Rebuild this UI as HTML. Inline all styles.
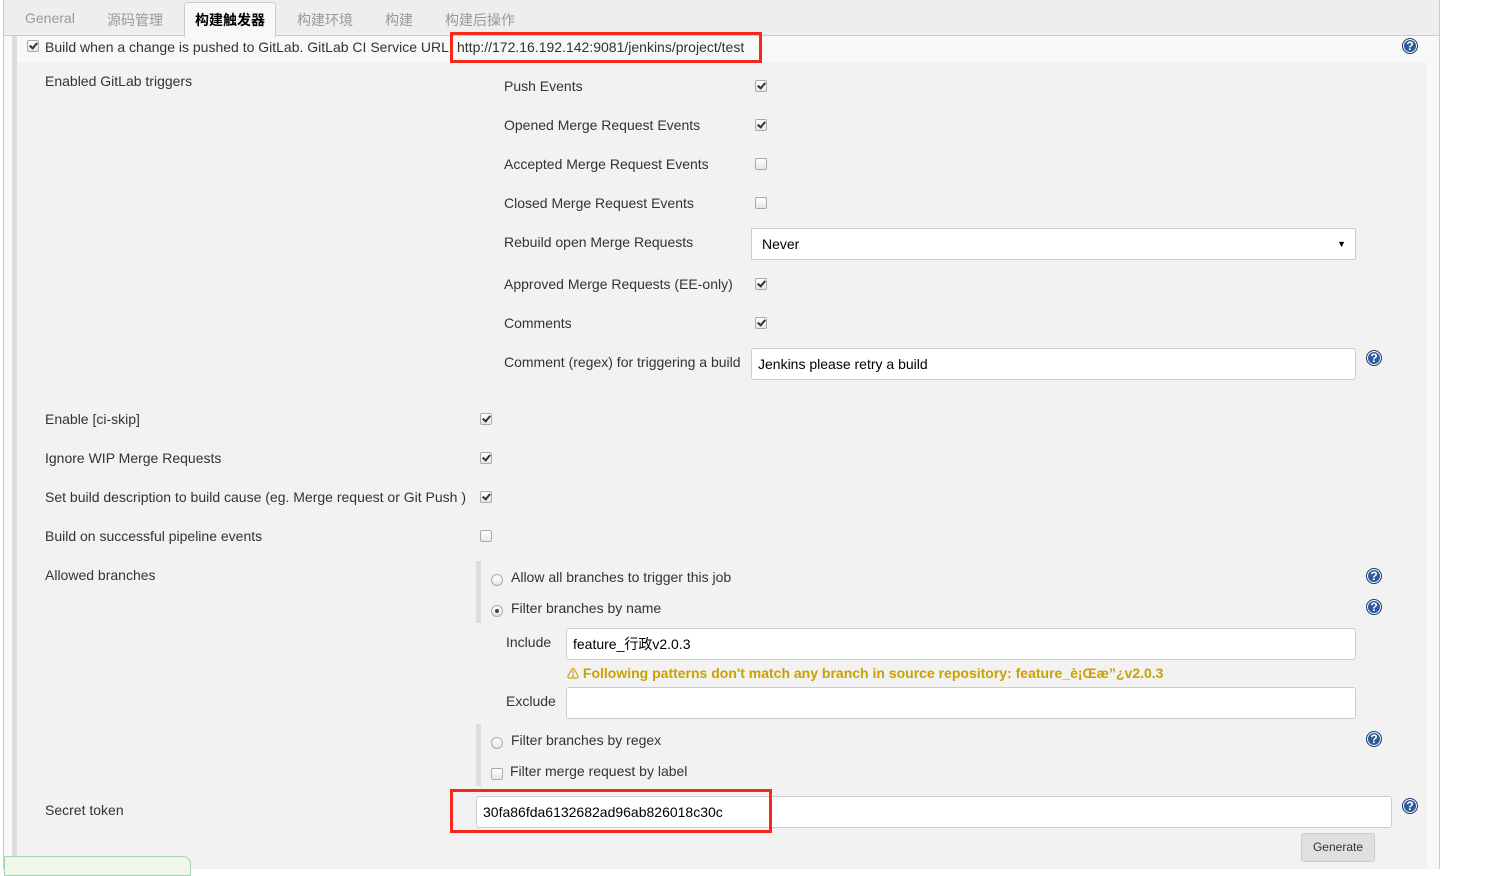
<!DOCTYPE html>
<html><head><meta charset="utf-8"><style>
*{box-sizing:border-box;margin:0;padding:0}
body{width:1492px;height:869px;background:#fff;position:relative;overflow:hidden;font-family:"Liberation Sans","Noto Sans CJK SC",sans-serif;font-size:14px;color:#333}
.a{position:absolute;white-space:nowrap}
.cb{position:absolute;width:12px;height:12px;border:1px solid #aaa;border-radius:2px;background:linear-gradient(#fff,#e6e6e6)}
.cb.on::after{content:"";position:absolute;left:3px;top:0px;width:3px;height:6px;border:solid #333;border-width:0 2px 2px 0;transform:rotate(40deg)}
.rd{position:absolute;width:12px;height:12px;border:1px solid #aaa;border-radius:50%;background:linear-gradient(#fff,#e6e6e6)}
.rd.on::after{content:"";position:absolute;left:3px;top:3px;width:4px;height:4px;border-radius:50%;background:#444}
.in{position:absolute;background:#fff;border:1px solid #ccc;border-radius:3px;font-size:14px;color:#000;padding-left:6px;display:flex;align-items:center}
.hp{position:absolute;width:16px;height:16px;border-radius:50%;background:#2e5b9a;border:1px solid #1d3f70;box-shadow:inset 0 0 0 1px #fff;color:#fff;font-weight:bold;font-size:12px;line-height:14px;text-align:center}
.red{position:absolute;border:3px solid #f5281e}
.tab{position:absolute;top:10px;color:#999;font-size:14px}
</style></head><body>
<div class="a" style="left:3px;top:0;width:1437px;height:869px;background:#f8f8f8;border-left:1px solid #ccc;border-right:1px solid #ccc"></div>
<div class="a" style="left:4px;top:0;width:1435px;height:36px;background:#eee;border-bottom:1px solid #ccc"></div>
<div class="a" style="left:184px;top:2px;width:92px;height:35px;background:#f8f8f8;border:1px solid #ccc;border-bottom:none;border-radius:3px 3px 0 0"></div>
<div class="tab" style="left:25px">General</div>
<div class="tab" style="left:107px">源码管理</div>
<div class="tab" style="left:195px;color:#000;font-weight:bold">构建触发器</div>
<div class="tab" style="left:297px">构建环境</div>
<div class="tab" style="left:385px">构建</div>
<div class="tab" style="left:445px">构建后操作</div>
<div class="a" style="left:12px;top:36px;width:5px;height:833px;background:#ddd"></div>
<div class="a" style="left:17px;top:62px;width:1410px;height:807px;background:#f2f2f2"></div>
<div class="cb on" style="left:27px;top:40px"></div>
<div class="a" style="left:45px;top:39px">Build when a change is pushed to GitLab. GitLab CI Service URL:</div>
<div class="a" style="left:457px;top:39px">http://172.16.192.142:9081/jenkins/project/test</div>
<div class="red" style="left:450px;top:32px;width:312px;height:31px"></div>
<div class="hp" style="left:1402px;top:38px">?</div>
<div class="a" style="left:45px;top:73px">Enabled GitLab triggers</div>
<div class="a" style="left:504px;top:78px">Push Events</div><div class="cb on" style="left:755px;top:80px"></div>
<div class="a" style="left:504px;top:117px">Opened Merge Request Events</div><div class="cb on" style="left:755px;top:119px"></div>
<div class="a" style="left:504px;top:156px">Accepted Merge Request Events</div><div class="cb" style="left:755px;top:158px"></div>
<div class="a" style="left:504px;top:195px">Closed Merge Request Events</div><div class="cb" style="left:755px;top:197px"></div>
<div class="a" style="left:504px;top:234px">Rebuild open Merge Requests</div>
<div class="in" style="left:751px;top:228px;width:605px;height:32px;border-radius:0;padding-left:10px">Never<span style="position:absolute;right:9px;font-size:9px">▼</span></div>
<div class="a" style="left:504px;top:276px">Approved Merge Requests (EE-only)</div><div class="cb on" style="left:755px;top:278px"></div>
<div class="a" style="left:504px;top:315px">Comments</div><div class="cb on" style="left:755px;top:317px"></div>
<div class="a" style="left:504px;top:354px">Comment (regex) for triggering a build</div>
<div class="in" style="left:751px;top:348px;width:605px;height:32px">Jenkins please retry a build</div>
<div class="hp" style="left:1366px;top:350px">?</div>
<div class="a" style="left:45px;top:411px">Enable [ci-skip]</div><div class="cb on" style="left:480px;top:413px"></div>
<div class="a" style="left:45px;top:450px">Ignore WIP Merge Requests</div><div class="cb on" style="left:480px;top:452px"></div>
<div class="a" style="left:45px;top:489px">Set build description to build cause (eg. Merge request or Git Push )</div><div class="cb on" style="left:480px;top:491px"></div>
<div class="a" style="left:45px;top:528px">Build on successful pipeline events</div><div class="cb" style="left:480px;top:530px"></div>
<div class="a" style="left:45px;top:567px">Allowed branches</div>
<div class="a" style="left:476px;top:561px;width:5px;height:62px;background:#ddd"></div>
<div class="rd" style="left:491px;top:574px"></div><div class="a" style="left:511px;top:569px">Allow all branches to trigger this job</div>
<div class="hp" style="left:1366px;top:568px">?</div>
<div class="rd on" style="left:491px;top:605px"></div><div class="a" style="left:511px;top:600px">Filter branches by name</div>
<div class="hp" style="left:1366px;top:599px">?</div>
<div class="a" style="left:506px;top:634px">Include</div>
<div class="in" style="left:566px;top:628px;width:790px;height:32px">feature_行政v2.0.3</div>
<div class="a" style="left:567px;top:665px;color:#c9a100;font-weight:bold"><span style="font-size:12px">⚠</span> Following patterns don't match any branch in source repository: feature_è¡Œæ”¿v2.0.3</div>
<div class="a" style="left:506px;top:693px">Exclude</div>
<div class="in" style="left:566px;top:687px;width:790px;height:32px"></div>
<div class="a" style="left:476px;top:724px;width:5px;height:62px;background:#ddd"></div>
<div class="rd" style="left:491px;top:737px"></div><div class="a" style="left:511px;top:732px">Filter branches by regex</div>
<div class="hp" style="left:1366px;top:731px">?</div>
<div class="cb" style="left:491px;top:768px"></div><div class="a" style="left:510px;top:763px">Filter merge request by label</div>
<div class="a" style="left:45px;top:802px">Secret token</div>
<div class="in" style="left:476px;top:796px;width:916px;height:32px">30fa86fda6132682ad96ab826018c30c</div>
<div class="red" style="left:450px;top:789px;width:322px;height:44px"></div>
<div class="hp" style="left:1402px;top:798px">?</div>
<div class="a" style="left:1301px;top:833px;width:74px;height:29px;background:#e0e0e0;border:1px solid #ccc;border-radius:3px;font-size:12px;color:#333;text-align:center;line-height:27px">Generate</div>
<div class="a" style="left:4px;top:856px;width:187px;height:20px;background:#f0f6ec;border:1px solid #a8d5b8;border-radius:0 8px 0 0"></div>
</body></html>
